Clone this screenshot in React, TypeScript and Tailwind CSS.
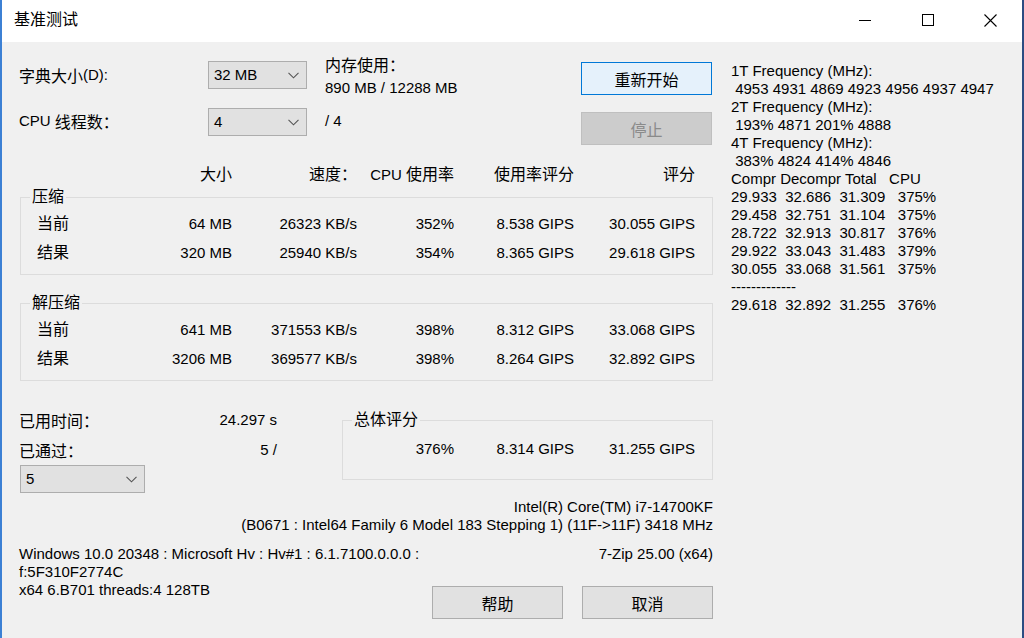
import React from "react";

const FONT = "font-['Liberation_Sans','Noto_Sans_CJK_SC',sans-serif]";

function Cn({ children }: { children: React.ReactNode }) {
	return (
		<span className="font-['Noto_Sans_CJK_SC',sans-serif] text-[16px] leading-none">
			{children}
		</span>
	);
}

function Combo({ value, width }: { value: string; width: string }) {
	return (
		<div
			className={`${width} h-[28px] border border-[#adadad] bg-[#e1e1e1] flex items-center justify-between pl-[5px] pr-[7px]`}
		>
			<span>{value}</span>
			<svg width="11" height="7" viewBox="0 0 11 7">
				<path d="M0.5 0.8 L5.5 5.8 L10.5 0.8" fill="none" stroke="#555" strokeWidth="1.1" />
			</svg>
		</div>
	);
}

function Btn({
	children,
	variant = "normal",
}: {
	children: React.ReactNode;
	variant?: "normal" | "focus" | "disabled";
}) {
	const styles = {
		normal: "border-[#adadad] bg-[#e1e1e1] text-black",
		focus: "border-[#0078d7] bg-[#e5f1fb] text-black",
		disabled: "border-[#bfbfbf] bg-[#cccccc] text-[#8a8a8a]",
	}[variant];
	return (
		<div className={`w-[131px] h-[33px] border flex items-center justify-center ${styles}`}>
			<Cn>{children}</Cn>
		</div>
	);
}

// columns measured from the group box's inner left edge
const COLS = "grid grid-cols-[211px_125px_97px_120px_121px]";

function DataRow({ label, cells }: { label: string; cells: string[] }) {
	return (
		<div className={`${COLS} h-[29px] items-center`}>
			<div className="flex justify-between">
				<span className="pl-[16px]">
					<Cn>{label}</Cn>
				</span>
				<span>{cells[0]}</span>
			</div>
			{cells.slice(1).map((c, i) => (
				<div key={i} className="text-right">
					{c}
				</div>
			))}
		</div>
	);
}

function Group({
	title,
	rows,
}: {
	title: string;
	rows: { label: string; cells: string[] }[];
}) {
	return (
		<fieldset className="ml-[1px] w-[693px] border border-[#dcdcdc] pt-[2px] pb-[7px]">
			<legend className="ml-[9px] px-[2px] leading-[20px]">
				<Cn>{title}</Cn>
			</legend>
			{rows.map((r) => (
				<DataRow key={r.label} label={r.label} cells={r.cells} />
			))}
		</fieldset>
	);
}

const freqLines = [
	"1T Frequency (MHz):",
	" 4953 4931 4869 4923 4956 4937 4947",
	"2T Frequency (MHz):",
	" 193% 4871 201% 4888",
	"4T Frequency (MHz):",
	" 383% 4824 414% 4846",
	"Compr Decompr Total   CPU",
	"29.933  32.686  31.309   375%",
	"29.458  32.751  31.104   375%",
	"28.722  32.913  30.817   376%",
	"29.922  33.043  31.483   379%",
	"30.055  33.068  31.561   375%",
	"-------------",
	"29.618  32.892  31.255   376%",
];

export default function App() {
	return (
		<div
			className={`${FONT} text-[15px] leading-[20px] text-black w-[1024px] h-[638px] bg-[#f0f0f0] border-l-2 border-l-[#3c80d4] border-r-2 border-r-[#2c4c82] flex flex-col overflow-hidden`}
		>
			{/* Title bar */}
			<div className="h-[42px] bg-white flex items-center justify-between pb-[2px]">
				<span className="pl-[12px]">
					<Cn>基准测试</Cn>
				</span>
				<div className="flex h-full">
					<div className="w-[63px] flex items-center justify-center">
						<svg width="12" height="12" viewBox="0 0 12 12">
							<path d="M0 6.5 H12" stroke="#000" strokeWidth="1" />
						</svg>
					</div>
					<div className="w-[63px] flex items-center justify-center">
						<svg width="12" height="12" viewBox="0 0 12 12">
							<rect x="0.5" y="0.5" width="11" height="11" fill="none" stroke="#000" strokeWidth="1" />
						</svg>
					</div>
					<div className="w-[63px] flex items-center justify-center">
						<svg width="13" height="13" viewBox="0 0 13 13">
							<path d="M0.5 0.5 L12.5 12.5 M12.5 0.5 L0.5 12.5" stroke="#000" strokeWidth="1.1" />
						</svg>
					</div>
				</div>
			</div>

			{/* Body */}
			<div className="flex flex-1">
				<div className="w-[711px] pl-[17px]">
					{/* Settings rows */}
					<div className="mt-[19px] h-[47px] flex items-start">
						<div className="w-[189px] h-[28px] flex items-center">
							<Cn>字典大小</Cn>(D):
						</div>
						<Combo value="32 MB" width="w-[99px]" />
						<div className="ml-[18px] w-[256px] -mt-[6px] leading-[22px]">
							<div>
								<Cn>内存使用：</Cn>
							</div>
							<div>890 MB / 12288 MB</div>
						</div>
						<div className="mt-[1px]">
							<Btn variant="focus">重新开始</Btn>
						</div>
					</div>
					<div className="h-[47px] flex items-start">
						<div className="w-[189px] h-[26px] flex items-center">
							CPU&nbsp;<Cn>线程数：</Cn>
						</div>
						<Combo value="4" width="w-[99px]" />
						<div className="ml-[18px] w-[256px] h-[26px] flex items-center">/ 4</div>
						<div className="mt-[4px]">
							<Btn variant="disabled">停止</Btn>
						</div>
					</div>

					{/* Column headers */}
					<div className={`${COLS} ml-[2px] mt-[10px] h-[20px] items-center text-right`}>
						<div>
							<Cn>大小</Cn>
						</div>
						<div>
							<Cn>速度：</Cn>
						</div>
						<div>
							CPU <Cn>使用率</Cn>
						</div>
						<div>
							<Cn>使用率评分</Cn>
						</div>
						<div>
							<Cn>评分</Cn>
						</div>
					</div>

					<div className="mt-[2px]">
						<Group
							title="压缩"
							rows={[
								{ label: "当前", cells: ["64 MB", "26323 KB/s", "352%", "8.538 GIPS", "30.055 GIPS"] },
								{ label: "结果", cells: ["320 MB", "25940 KB/s", "354%", "8.365 GIPS", "29.618 GIPS"] },
							]}
						/>
					</div>
					<div className="mt-[18px]">
						<Group
							title="解压缩"
							rows={[
								{ label: "当前", cells: ["641 MB", "371553 KB/s", "398%", "8.312 GIPS", "33.068 GIPS"] },
								{ label: "结果", cells: ["3206 MB", "369577 KB/s", "398%", "8.264 GIPS", "32.892 GIPS"] },
							]}
						/>
					</div>

					{/* Time / passes / total rating */}
					<div className="mt-[24px] flex">
						<div className="w-[323px]">
							<div className="w-[258px] h-[30px] flex items-center justify-between">
								<Cn>已用时间：</Cn>
								<span>24.297 s</span>
							</div>
							<div className="w-[258px] h-[30px] flex items-center justify-between">
								<Cn>已通过：</Cn>
								<span>5 /</span>
							</div>
							<div className="ml-[1px]">
								<Combo value="5" width="w-[125px]" />
							</div>
						</div>
						<fieldset className="mt-[5px] w-[371px] h-[70px] border border-[#dcdcdc] pt-[4px]">
							<legend className="ml-[9px] px-[2px] leading-[20px]">
								<Cn>总体评分</Cn>
							</legend>
							<div className="grid grid-cols-[111px_120px_121px] h-[29px] items-center text-right">
								<div>376%</div>
								<div>8.314 GIPS</div>
								<div>31.255 GIPS</div>
							</div>
						</fieldset>
					</div>

					{/* CPU info */}
					<div className="mt-[5px] text-right leading-[18px]">
						<div>Intel(R) Core(TM) i7-14700KF</div>
						<div>(B0671 : Intel64 Family 6 Model 183 Stepping 1) (11F-&gt;11F) 3418 MHz</div>
					</div>

					<div className="mt-[11px] flex justify-between leading-[18px]">
						<div className="whitespace-nowrap">
							<div>Windows 10.0 20348 : Microsoft Hv : Hv#1 : 6.1.7100.0.0.0 :</div>
							<div>f:5F310F2774C</div>
							<div>x64 6.B701 threads:4 128TB</div>
						</div>
						<div className="flex flex-col items-end">
							<div>7-Zip 25.00 (x64)</div>
							<div className="mt-[23px] flex gap-[19px]">
								<Btn>帮助</Btn>
								<Btn>取消</Btn>
							</div>
						</div>
					</div>
				</div>

				{/* Frequency / pass log */}
				<div className="ml-[18px] mt-[20px] leading-[18px] whitespace-pre">
					{freqLines.map((l, i) => (
						<div key={i}>{l}</div>
					))}
				</div>
			</div>
		</div>
	);
}
